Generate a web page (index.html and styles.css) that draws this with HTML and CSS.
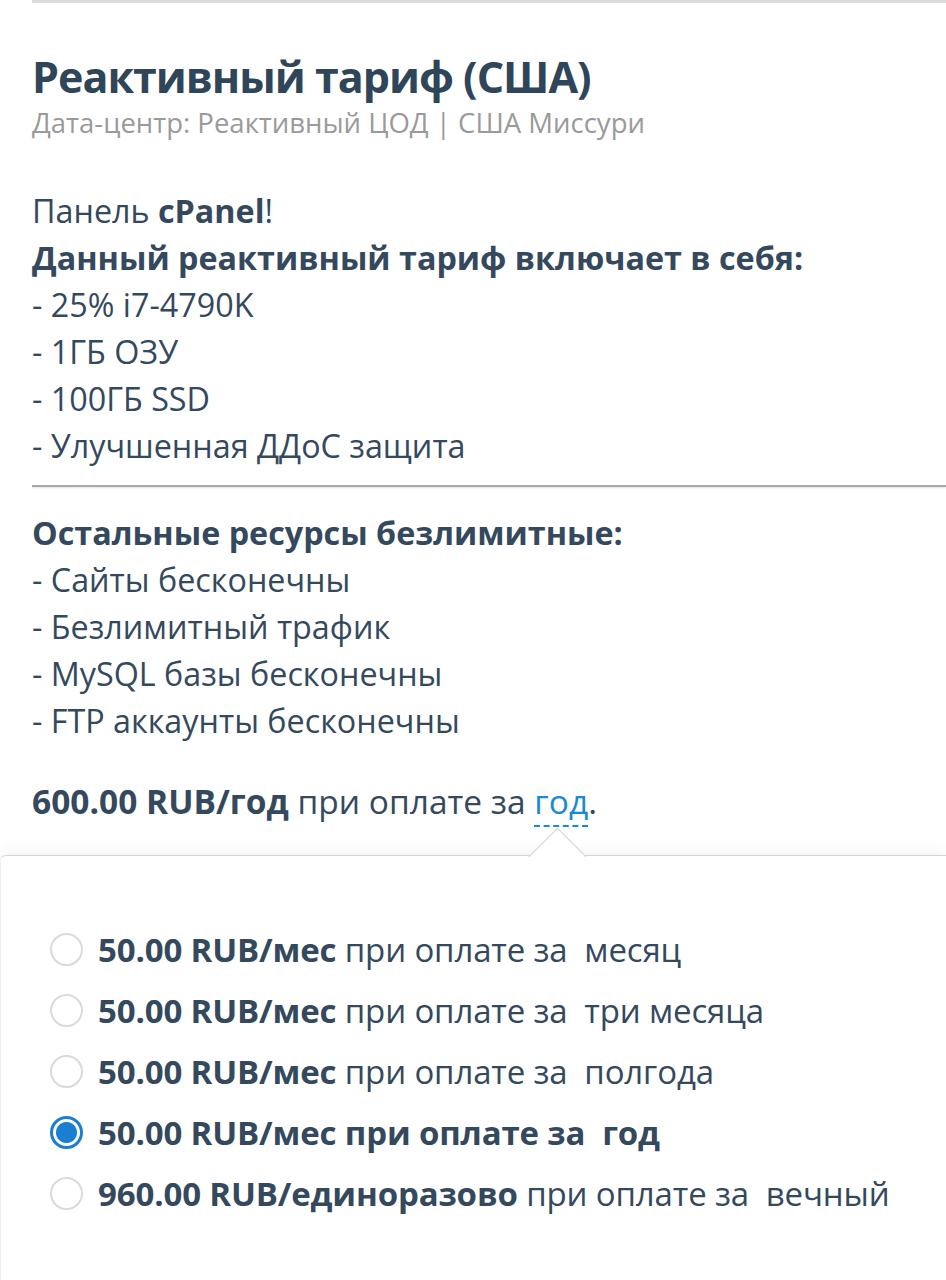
FILE: index.html
```html
<!DOCTYPE html>
<html lang="ru">
<head>
<meta charset="utf-8">
<title>Реактивный тариф (США)</title>
<link rel="stylesheet" href="styles.css">
</head>
<body>
<div class="page">
  <div class="topbar"></div>
  <section class="product">
    <h1 class="title">Реактивный тариф (США)</h1>
    <div class="subtitle">Дата-центр: Реактивный ЦОД | США Миссури</div>
    <div class="desc desc-first">
      <div>Панель <b>cPanel</b>!</div>
      <div><b>Данный реактивный тариф включает в себя:</b></div>
      <div>- 25% i7-4790K</div>
      <div>- 1ГБ ОЗУ</div>
      <div>- 100ГБ SSD</div>
      <div>- Улучшенная ДДоС защита</div>
    </div>
    <hr class="rule">
    <div class="desc">
      <div><b>Остальные ресурсы безлимитные:</b></div>
      <div>- Сайты бесконечны</div>
      <div>- Безлимитный трафик</div>
      <div>- MySQL базы бесконечны</div>
      <div>- FTP аккаунты бесконечны</div>
    </div>
    <div class="price"><b>600.00 RUB/год</b> при оплате за <span class="cycle">год</span>.</div>
  </section>
  <div class="popover">
    <ul class="options">
      <li class="option"><span class="radio"></span><span><b>50.00 RUB/мес</b> при оплате за&nbsp; месяц</span></li>
      <li class="option"><span class="radio"></span><span><b>50.00 RUB/мес</b> при оплате за&nbsp; три месяца</span></li>
      <li class="option"><span class="radio"></span><span><b>50.00 RUB/мес</b> при оплате за&nbsp; полгода</span></li>
      <li class="option selected"><span class="radio"></span><span><b>50.00 RUB/мес при оплате за&nbsp; год</b></span></li>
      <li class="option"><span class="radio"></span><span><b>960.00 RUB/единоразово</b> при оплате за&nbsp; вечный</span></li>
    </ul>
  </div>
</div>
</body>
</html>
```

FILE: styles.css
```css
html, body {
  margin: 0;
  padding: 0;
  background: #ffffff;
}
body {
  font-family: "Open Sans", "Noto Sans", sans-serif;
  color: #34495e;
  width: 946px;
  height: 1280px;
  overflow: hidden;
}
.page {
  position: relative;
}
.topbar {
  margin-left: 32px;
  height: 3px;
  background: #dcdcdc;
}
.product {
  padding: 0 0 0 32px;
}
.title {
  margin: 48px 0 0;
  font-size: 43px;
  line-height: 52px;
  font-weight: 700;
  color: #2f4559;
  letter-spacing: -1px;
}
.subtitle {
  margin-top: 4px;
  font-size: 27.5px;
  line-height: 32px;
  color: #9a9a9a;
}
.desc {
  font-size: 32.3px;
  line-height: 47px;
  color: #34495e;
}
.desc-first {
  margin-top: 48px;
}
.desc b {
  font-weight: 700;
}
.rule {
  margin: 16px 0 22px;
  border: 0;
  height: 2px;
  background: #a9a9a9;
  box-shadow: 0 1px 2px rgba(0,0,0,0.12);
}
.price {
  margin-top: 34px;
  font-size: 33.5px;
  line-height: 47px;
}
.cycle {
  color: #1a8ad4;
  border-bottom: 2px dashed #1a8ad4;
  padding-bottom: 1px;
}
.popover {
  position: relative;
  margin-top: 30px;
  border-top: 1px solid #d4d4d4;
  border-left: 1px solid #eeeeee;
  border-top-left-radius: 6px;
  box-shadow: 0 -6px 14px rgba(0,0,0,0.04);
  padding: 63px 0 120px;
  background: #fff;
}
.popover::before {
  content: "";
  position: absolute;
  left: 536px;
  top: -20px;
  width: 40px;
  height: 40px;
  background: #fff;
  border-top: 1px solid #d4d4d4;
  border-left: 1px solid #d4d4d4;
  transform: rotate(45deg);
}
.options {
  list-style: none;
  margin: 0;
  padding: 0 0 0 49px;
}
.option {
  display: flex;
  align-items: center;
  gap: 15px;
  height: 61px;
  font-size: 33px;
  color: #34495e;
  letter-spacing: -0.15px;
}
.radio {
  box-sizing: border-box;
  width: 33px;
  height: 33px;
  border-radius: 50%;
  border: 2px solid #dadada;
  background: #fff;
  flex: none;
}
.selected .radio {
  border: 3px solid #1a7fd0;
  background: radial-gradient(circle, #1a7fd0 0 10px, #fff 11px);
}
```
